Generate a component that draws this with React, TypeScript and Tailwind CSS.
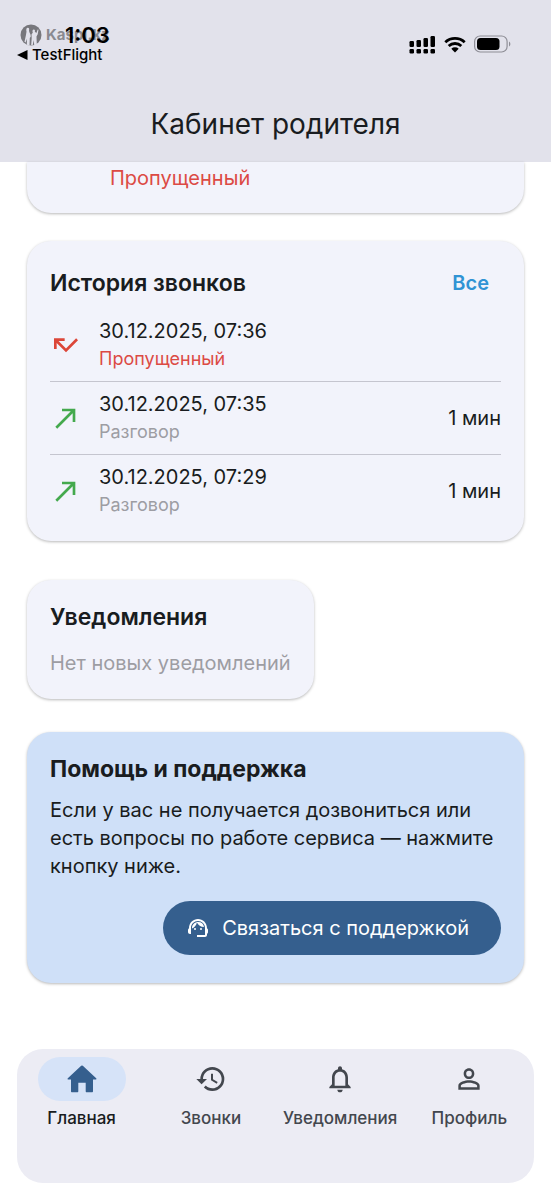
import React from 'react';
import {
	MdCallMade,
	MdCallMissed,
	MdHistory,
	MdNotificationsNone,
	MdPersonOutline,
	MdSupportAgent,
} from 'react-icons/md';

type Call = {
	date: string;
	missed?: boolean;
	duration?: string;
};

const calls: Call[] = [
	{ date: '30.12.2025, 07:36', missed: true },
	{ date: '30.12.2025, 07:35', duration: '1 мин' },
	{ date: '30.12.2025, 07:29', duration: '1 мин' },
];

const HomeIcon: React.FC = () => (
	<svg viewBox="0 0 30 28" className="h-7 w-[30px]" fill="currentColor" aria-hidden="true">
		<path d="M14.2 .8a1.2 1.2 0 0 1 1.6 0l13.4 12.4c.5.5.3 1.3-.5 1.3H26v11.8c0 .6-.4 1-1 1h-5.3c-.6 0-1-.4-1-1v-8.6h-7.4v8.6c0 .6-.4 1-1 1H5c-.6 0-1-.4-1-1V14.5H1.3c-.8 0-1-.8-.5-1.300z" />
	</svg>
);

const KaspiLogo: React.FC = () => (
	<svg viewBox="0 0 22 22" className="size-[22px]" aria-hidden="true">
		<circle cx="11" cy="11" r="10.5" fill="#77777c" />
		<g fill="#e2e2eb">
			<path d="M7.800 3.800c1.300 0 1.700 1.200 1.200 2.500l.3 1.700 1.200 2.500.3 2-1 1.500L9.500 21.500 6.800 20.800l.2-6-1.500 3.700-1-.8 1.300-6 .7-4c-.5-1.700-.2-3.900 1.300-3.900z" />
			<path d="M13.800 5.500c1.200 0 1.500 1.200 1 2.300l1.600 1.200 1.300-3.500.8.300-.8 4.500-1.200 2.200.3 8-2.500 1-.7-5.500-.9 5.300-1.500-.3.500-7-.2-3.500 1.300-2c-.6-1.300-.3-3 1-3z" />
		</g>
	</svg>
);

const StatusIcons: React.FC = () => (
	<div className="flex items-center gap-2">
		<svg viewBox="0 0 27 19" className="h-[19px] w-[27px]" aria-label="Сигнал">
			<rect x="0.5" y="6" width="4.5" height="6" rx="1.2" />
			<rect x="7.5" y="5" width="4.5" height="7" rx="1.2" />
			<rect x="14.5" y="3" width="4.5" height="9" rx="1.2" />
			<rect x="21.5" y="1" width="4.5" height="11" rx="1.2" />
			<rect x="0.5" y="14" width="4.5" height="4.5" rx="1.2" />
			<rect x="7.5" y="14" width="4.5" height="4.5" rx="1.2" />
			<rect x="14.5" y="14" width="4.5" height="4.5" rx="1.2" />
			<rect x="21.5" y="14" width="4.5" height="4.5" rx="1.2" />
		</svg>
		<svg viewBox="0 0 22 17" className="h-[17px] w-[22px]" aria-label="Wi-Fi">
			<path d="M1.3 6.2a14.2 14.2 0 0 1 19.4 0M4.7 10a9.2 9.2 0 0 1 12.6 0" fill="none" stroke="#000" strokeWidth="2.8" />
			<path d="M7.3 12.8a5.4 5.4 0 0 1 7.4 0L11 16.6z" />
		</svg>
		<svg viewBox="0 0 37 18" className="h-[18px] w-[37px]" aria-label="Батарея">
			<rect x="0.6" y="1" width="32.5" height="16" rx="5.5" fill="none" stroke="#8e8e96" strokeWidth="1.2" />
			<rect x="3" y="3" width="22.5" height="12" rx="3.5" />
			<path d="M35 6.5c1.8.8 1.8 4.2 0 5z" fill="#8e8e96" />
		</svg>
	</div>
);

const CallRow: React.FC<{ call: Call }> = ({ call }) => (
	<li className="flex items-center border-b border-[#c5c5cf] py-2 last:border-b-0">
		<span className="flex w-[49px] shrink-0">
			{call.missed
				? <MdCallMissed size={32} color="#dc4638" />
				: <MdCallMade size={32} color="#44a94d" />}
		</span>
		<div className="flex-1 leading-7">
			<div className="text-[20px]">{call.date}</div>
			{call.missed
				? <div className="text-[18px] text-[#dc4a44]">Пропущенный</div>
				: <div className="text-[18px] text-[#9d9da3]">Разговор</div>}
		</div>
		<span className="text-[20px]">{call.duration}</span>
	</li>
);

const tabs = [
	{ title: 'Главная', icon: <HomeIcon />, active: true },
	{ title: 'Звонки', icon: <MdHistory size={32} /> },
	{ title: 'Уведомления', icon: <MdNotificationsNone size={32} /> },
	{ title: 'Профиль', icon: <MdPersonOutline size={32} /> },
];

const card = 'rounded-[24px] px-[23px] shadow-[0_1px_3px_rgba(0,0,0,0.28)]';

const App: React.FC = () => {
	return (
		<div className="min-h-screen bg-white font-['Inter','Liberation_Sans',sans-serif] text-[#191c20]">
			<header className="bg-[#e2e2eb]">
				<div className="flex h-[88px] items-center justify-between pr-10 pl-[17px] text-black">
					<div className="pt-0.5">
						<div className="relative flex h-5 items-center gap-1 pl-[3px]">
							<KaspiLogo />
							<span className="text-[15px] font-bold text-[#8a8a91]">Kaspi.kz</span>
							<span className="absolute left-12 text-[22px] font-semibold">1:03</span>
						</div>
						<a href="#" className="flex items-center gap-1 text-[15px] leading-5 font-medium">
							<svg viewBox="0 0 11 10" className="h-2.5 w-[11px]" aria-hidden="true">
								<path d="M0 5 10.5 0v10z" />
							</svg>
							TestFlight
						</a>
					</div>
					<StatusIcons />
				</div>
				<h1 className="h-[74px] pt-4 text-center text-[28px] leading-10">Кабинет родителя</h1>
			</header>

			<main className="px-[27px]">
				<section className="rounded-b-[24px] bg-[#f2f3fb] pt-0.5 pr-6 pb-[21px] pl-[83px] text-[20px] leading-7 text-[#dc4a44] shadow-[0_1px_3px_rgba(0,0,0,0.28)]">
					Пропущенный
				</section>

				<section className={`${card} mt-7 bg-[#f2f3fb] pt-6 pb-3.5`}>
					<div className="mb-2 flex h-9 items-center justify-between">
						<h2 className="text-[23px] leading-7 font-semibold">История звонков</h2>
						<a href="#" className="pr-3 text-[20px] font-semibold text-[#3093d4]">Все</a>
					</div>
					<ul>
						{calls.map((call) => <CallRow key={call.date} call={call} />)}
					</ul>
				</section>

				<section className={`${card} mt-[39px] w-fit bg-[#f2f3fb] pt-[23px] pb-[22px]`}>
					<h2 className="text-[23px] leading-7 font-semibold">Уведомления</h2>
					<p className="mt-[18px] text-[20px] leading-7 text-[#9d9da3]">Нет новых уведомлений</p>
				</section>

				<section className={`${card} mt-[33px] bg-[#cfe0f8] pt-[23px] pb-7`}>
					<h2 className="text-[23px] leading-7 font-bold">Помощь и поддержка</h2>
					<p className="mt-[13px] text-[20px] leading-7">
						Если у вас не получается дозвониться или есть вопросы по работе сервиса — нажмите кнопку ниже.
					</p>
					<button type="button" className="mt-[21px] ml-auto flex h-[54px] items-center gap-3 rounded-full bg-[#355f8e] pr-8 pl-[23px] text-[20px] text-white">
						<MdSupportAgent size={24} />
						Связаться с поддержкой
					</button>
				</section>
			</main>

			<div className="px-[17px] pt-[66px] pb-[17px]">
				<nav className="grid grid-cols-4 rounded-[26px] bg-[#ececf4] pt-2 pb-[53px]">
					{tabs.map((tab) => (
						<a
							key={tab.title}
							href="#"
							className={tab.active ? 'flex flex-col items-center text-[#355f8e]' : 'flex flex-col items-center text-[#43474e]'}
						>
							<span className={tab.active ? 'flex h-11 w-[88px] items-center justify-center rounded-full bg-[#d6e3f8]' : 'flex h-11 items-center'}>
								{tab.icon}
							</span>
							<span className={tab.active ? 'mt-[5px] text-[17px] leading-6 font-medium text-[#191c20]' : 'mt-[5px] text-[17px] leading-6 font-medium'}>
								{tab.title}
							</span>
						</a>
					))}
				</nav>
			</div>
		</div>
	);
};

export default App;
